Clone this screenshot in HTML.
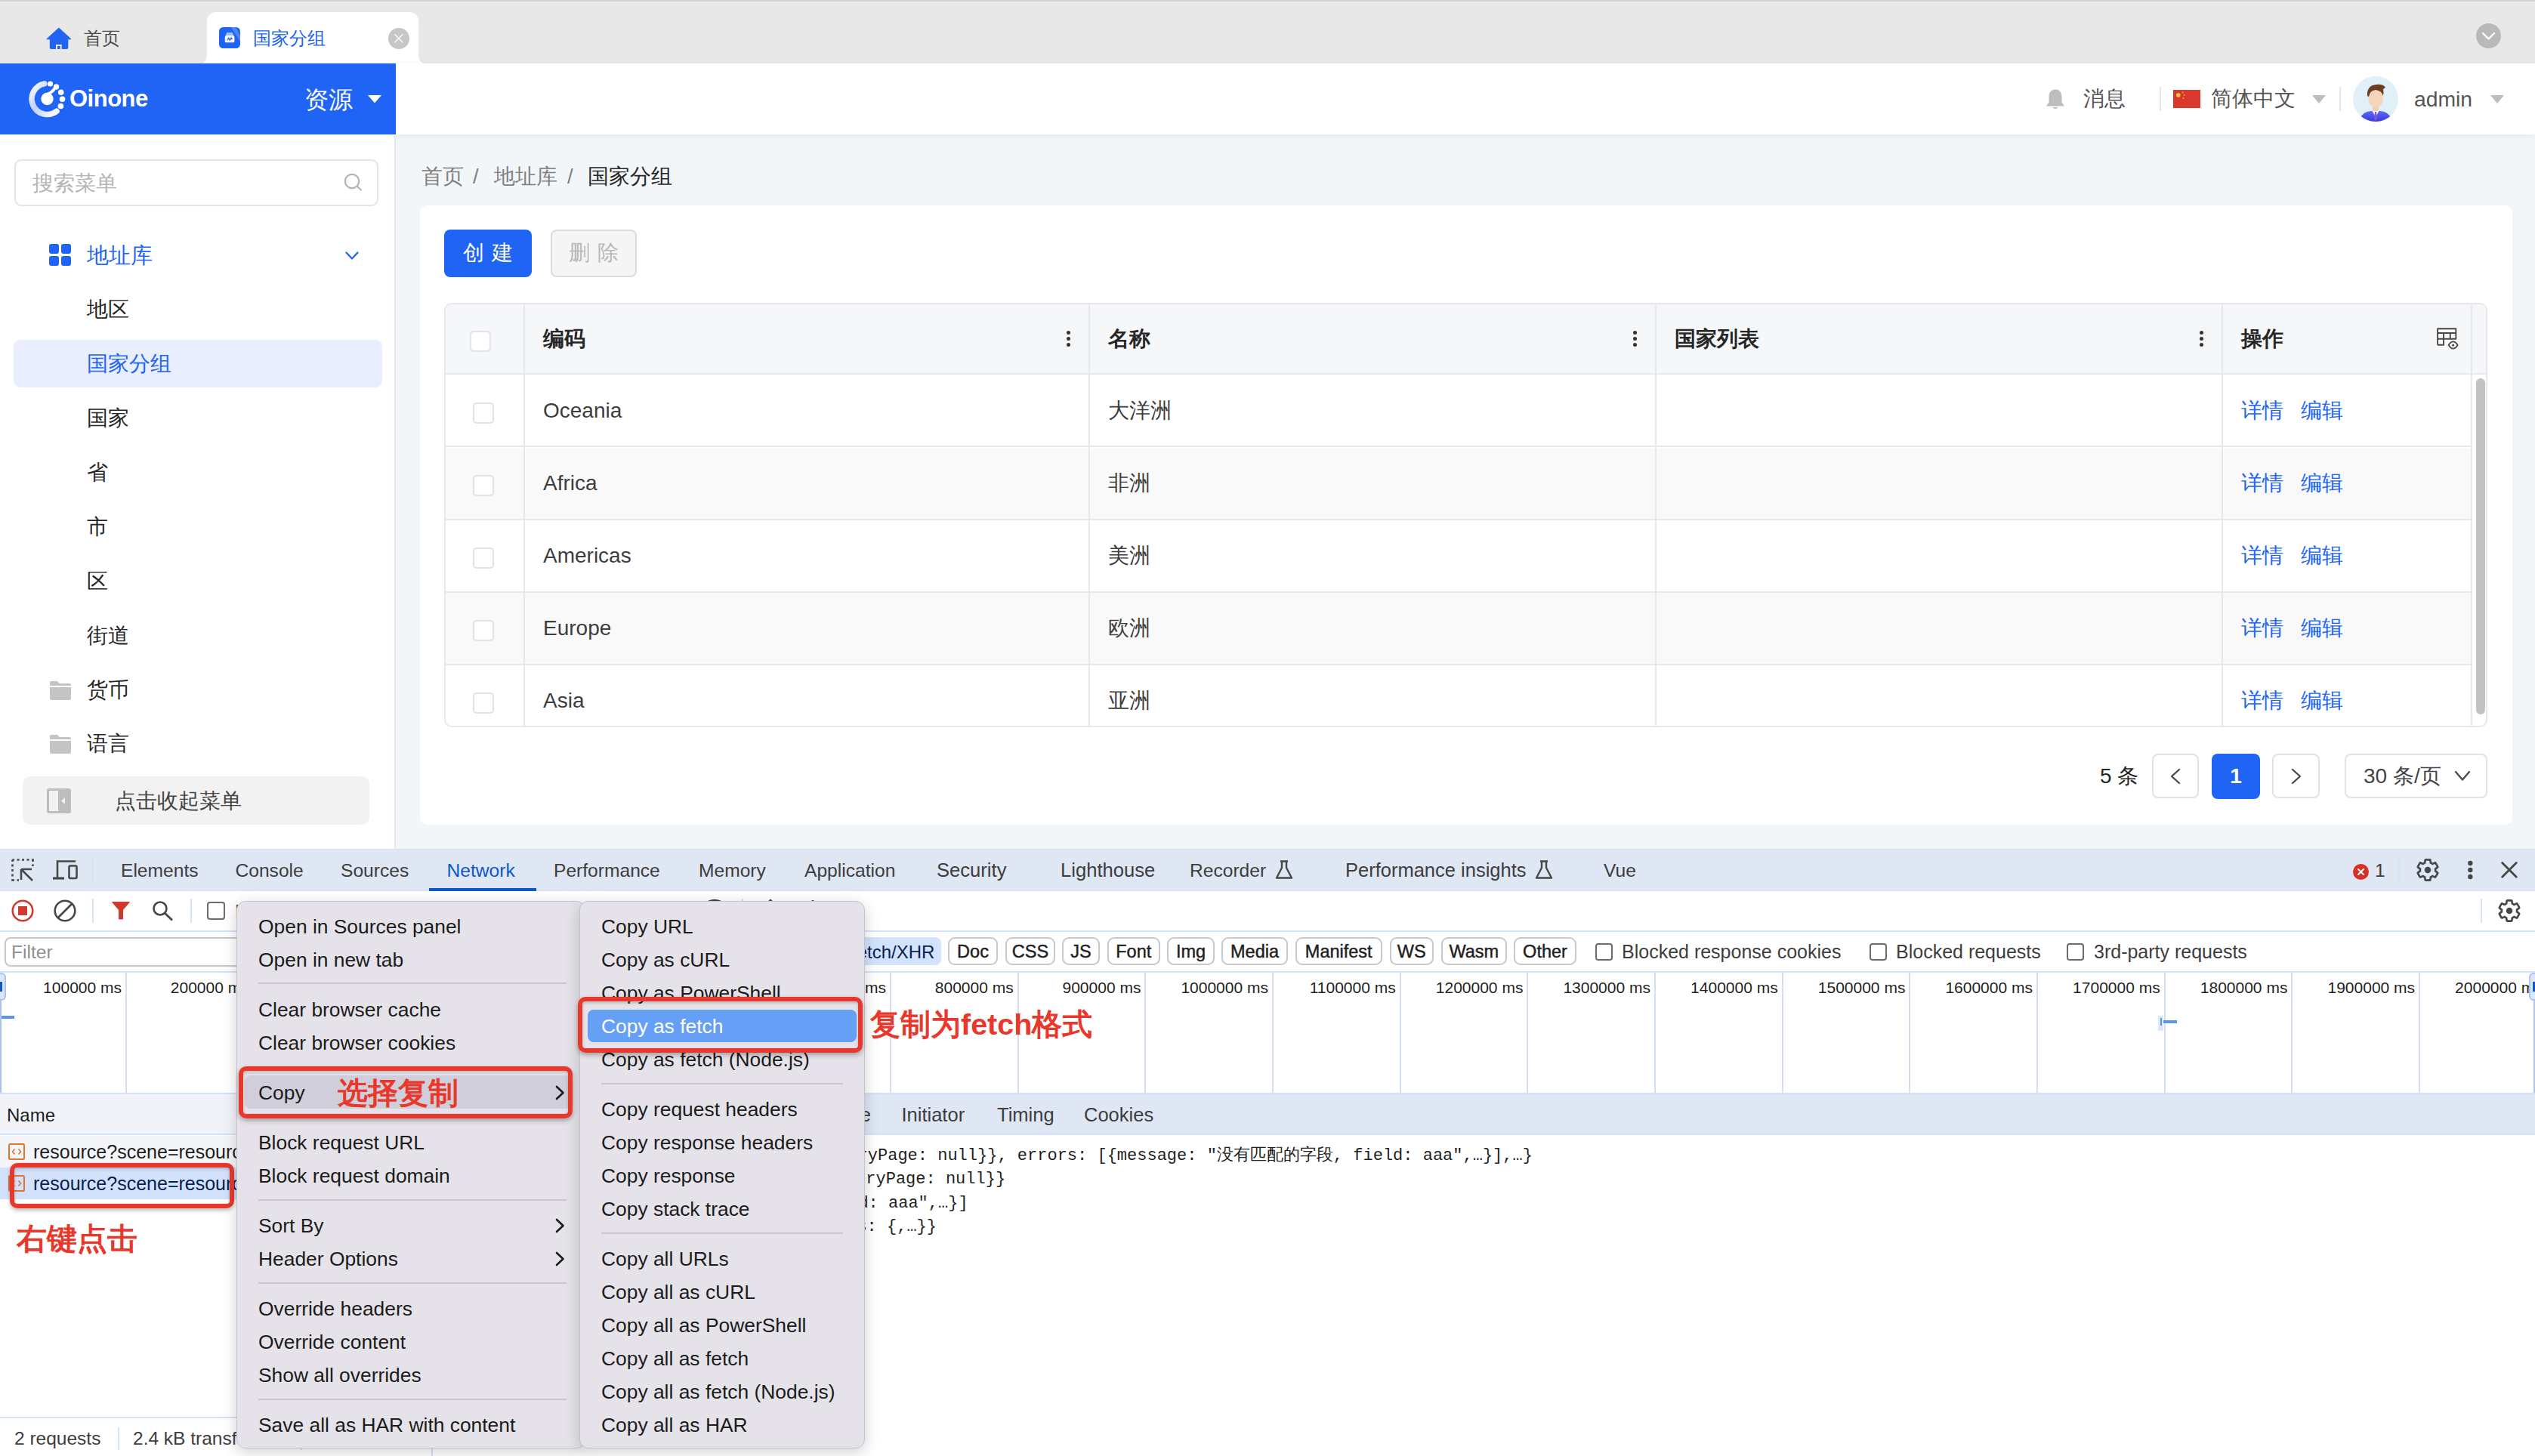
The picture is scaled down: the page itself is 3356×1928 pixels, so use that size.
<!DOCTYPE html>
<html><head><meta charset="utf-8">
<style>
*{box-sizing:border-box;margin:0;padding:0}
html,body{width:3356px;height:1928px;overflow:hidden}
body{position:relative;background:#f3f6f9;font-family:"Liberation Sans",sans-serif;color:#262626}
.a{position:absolute;white-space:nowrap}
.t{position:absolute;white-space:nowrap;line-height:40px;height:40px}
/* tab bar */
#tabbar{left:0;top:0;width:3356px;height:84px;background:#e8e8e8;border-top:2px solid #d2d2d2}
/* header */
#hdr{left:0;top:84px;width:3356px;height:94px;background:#fff;box-shadow:0 2px 8px rgba(0,0,0,0.06);z-index:2}
#blue{left:0;top:0;width:524px;height:94px;background:#2064f6}
/* sidebar */
#side{left:0;top:178px;width:524px;height:946px;background:#fff;border-right:2px solid #e3e7ee;box-shadow:inset 0 1px 0 #eef0f3;z-index:3}
.mi{position:absolute;left:115px;font-size:28px;line-height:40px;height:40px;color:#262626}
/* card */
#card{left:556px;top:272px;width:2770px;height:820px;background:#fff;border-radius:10px}
.cb{position:absolute;width:28px;height:28px;border:2px solid #dfe2ea;border-radius:5px;background:#fff}
.hd{position:absolute;font-size:28px;font-weight:bold;line-height:40px;color:#262626}
.cell{position:absolute;font-size:28px;line-height:40px;color:#3d3d3d}
.lnk{position:absolute;font-size:28px;line-height:40px;color:#2064f6}
.dots{position:absolute;width:6px;height:24px}
.dots i{position:absolute;left:0;width:5.4px;height:5.4px;border-radius:50%;background:#333}
/* devtools */
#dt{left:0;top:1124px;width:3356px;height:804px;background:#fff}
.dtab{position:absolute;top:1px;font-size:24.6px;line-height:55px;color:#3d3d3d}
.chip{position:absolute;top:117px;height:37px;border:2px solid #c9c9c9;border-radius:9px;font-size:23.5px;line-height:35px;text-align:center;color:#1f1f1f;-webkit-text-stroke:0.45px #1f1f1f}
.tl{position:absolute;top:170px;font-size:21px;line-height:28px;color:#1f1f1f;text-align:right;width:160px}
.gl{position:absolute;top:163px;width:2px;height:161px;background:#d3def5}
.menu{position:absolute;background:#e5e3e9;border:1px solid #c5c3ca;border-radius:12px;box-shadow:0 5px 20px rgba(0,0,0,0.18)}
.mt{position:absolute;font-size:26.4px;line-height:40px;color:#1b1b1b;white-space:nowrap}
.sep{position:absolute;height:2px;background:#c9c7cd}
.mono{position:absolute;font-family:"Liberation Mono",monospace;font-size:22px;line-height:30px;color:#1f1f1f;white-space:pre}
.red{position:absolute;border:6px solid #e8382c;border-radius:10px}
.ann{position:absolute;color:#e8382c;font-size:39.5px;line-height:48px;white-space:nowrap;font-weight:600}
</style></head><body>

<!-- TAB BAR -->
<div id="tabbar" class="a">
  <!-- home tab -->
  <svg class="a" style="left:61px;top:33.5px" width="34" height="30" viewBox="0 0 34 30"><path d="M0.8 15.8 L16.9 1 L33 15.8 Z" fill="#2064f6" stroke="#2064f6" stroke-width="1" stroke-linejoin="round"/><path d="M4.8 15 H29.3 V27 Q29.3 29 27.3 29 H6.8 Q4.8 29 4.8 27 Z" fill="#2064f6"/><rect x="13" y="23" width="7.7" height="6" fill="#e8e8e8"/><rect x="15" y="25" width="3.7" height="4" fill="#2064f6"/></svg>
  <div class="t" style="left:111px;top:29px;font-size:24px;color:#4d4d4d">首页</div>
  <!-- active tab -->
  <div class="a" style="left:274px;top:14px;width:280px;height:70px;background:#fff;border-radius:12px 12px 0 0"></div>
  <div class="a" style="left:262px;top:72px;width:12px;height:12px;background:radial-gradient(circle at 0 0,#e8e8e8 11.5px,#fff 12px)"></div>
  <div class="a" style="left:554px;top:72px;width:12px;height:12px;background:radial-gradient(circle at 100% 0,#e8e8e8 11.5px,#fff 12px)"></div>
  <svg class="a" style="left:290px;top:34px" width="28" height="28" viewBox="0 0 28 28"><defs><clipPath id="tic"><rect width="28" height="28" rx="5.5"/></clipPath></defs><g clip-path="url(#tic)"><rect width="28" height="28" fill="#2064f6"/><path d="M16 0 L22 0 L28 11 L28 19 Z" fill="#fff" fill-opacity="0.22"/></g><rect x="10" y="7.3" width="8" height="1.4" fill="#fff" fill-opacity="0.8"/><rect x="9" y="9.4" width="10" height="1.4" fill="#fff" fill-opacity="0.9"/><rect x="7.8" y="11.3" width="12.6" height="9" rx="1.6" fill="#fff"/><path d="M10.8 17.2 L12.8 14.3 L14.2 17.2 L16.2 14 L17.5 16.3" stroke="#2064f6" stroke-width="1.3" fill="none"/></svg>
  <div class="t" style="left:335px;top:29px;font-size:24px;color:#2064f6">国家分组</div>
  <div class="a" style="left:514px;top:35px;width:28px;height:28px;border-radius:50%;background:#c6c6c6"></div>
  <svg class="a" style="left:514px;top:35px" width="28" height="28" viewBox="0 0 28 28"><path d="M8.8 8.8 L19 19 M19 8.8 L8.8 19" stroke="#fff" stroke-width="1.3" stroke-linecap="round"/></svg>
  <!-- right dropdown -->
  <div class="a" style="left:3278px;top:29px;width:33px;height:33px;border-radius:50%;background:#b9b9b9"></div>
  <svg class="a" style="left:3278px;top:29px" width="33" height="33" viewBox="0 0 33 33"><path d="M9 13 L16.5 20.5 L24 13" stroke="#fff" stroke-width="2.4" fill="none" stroke-linecap="round" stroke-linejoin="round"/></svg>
</div>

<!-- HEADER -->
<div id="hdr" class="a">
  <div id="blue" class="a">
    <svg class="a" style="left:36px;top:20px" width="52" height="54" viewBox="0 0 52 54">
      <defs><linearGradient id="lg" x1="0" y1="0" x2="1" y2="1"><stop offset="0" stop-color="#fff"/><stop offset="0.45" stop-color="#bcd0fb"/><stop offset="1" stop-color="#fff"/></linearGradient></defs>
      <path d="M22.76 6.86 A20.5 20.5 0 1 0 39 43.3" stroke="url(#lg)" stroke-width="7.5" fill="none" stroke-linecap="round"/>
      <circle cx="26.5" cy="27" r="8.2" fill="#fff"/>
      <path d="M26 21 Q33 19 37 12" stroke="#fff" stroke-width="4" fill="none" stroke-linecap="round"/>
      <circle cx="38.5" cy="11" r="3.7" fill="#fff"/>
      <circle cx="30.5" cy="7" r="3.6" fill="#fff"/>
      <circle cx="44.7" cy="18.2" r="3.8" fill="#fff"/>
      <circle cx="46.5" cy="27.3" r="3.8" fill="#fff"/>
      <circle cx="44.4" cy="36.5" r="3.8" fill="#fff"/>
    </svg>
    <div class="a" style="left:93px;top:110px;"></div>
    <div class="t" style="left:92px;top:10px;height:74px;line-height:74px;font-size:31px;font-weight:bold;color:#fff;letter-spacing:-0.5px">Oinone</div>
    <div class="t" style="left:403px;top:28px;font-size:31.5px;color:#fff">资源</div>
    <svg class="a" style="left:487px;top:41.5px" width="18" height="11" viewBox="0 0 18 11"><path d="M0 0 L18 0 L9 10.5 Z" fill="#fff"/></svg>
  </div>
  <!-- right header items -->
  <svg class="a" style="left:2708px;top:33px" width="26" height="30" viewBox="0 0 26 30"><path d="M13 1.5 C7 1.5 4.5 6 4.5 11 L4.5 18.5 L1 23.5 L25 23.5 L21.5 18.5 L21.5 11 C21.5 6 19 1.5 13 1.5 Z" fill="#bdbdbd"/><path d="M9.5 25 Q13 29.5 16.5 25 Z" fill="#bdbdbd"/></svg>
  <div class="t" style="left:2758px;top:27px;font-size:28px;color:#555">消息</div>
  <div class="a" style="left:2859px;top:31px;width:2px;height:32px;background:#e6e6e6"></div>
  <svg class="a" style="left:2877px;top:35px" width="36" height="24" viewBox="0 0 37 24" preserveAspectRatio="none"><rect width="37" height="24" fill="#d8392c"/><circle cx="7" cy="7" r="2.8" fill="#f4d03f"/><circle cx="13" cy="3.5" r="1" fill="#e8a83a"/><circle cx="15" cy="7" r="1" fill="#e8a83a"/><circle cx="14" cy="11" r="1" fill="#e8a83a"/></svg>
  <div class="t" style="left:2927px;top:27px;font-size:28px;color:#555">简体中文</div>
  <svg class="a" style="left:3061px;top:41.5px" width="18" height="12" viewBox="0 0 18 12"><path d="M0 0 L18 0 L9 11 Z" fill="#bdbdbd"/></svg>
  <div class="a" style="left:3097px;top:31px;width:2px;height:32px;background:#e6e6e6"></div>
  <svg class="a" style="left:3115px;top:17px" width="60" height="60" viewBox="0 0 60 60">
    <defs><clipPath id="av"><circle cx="30" cy="30" r="30"/></clipPath><linearGradient id="suit" x1="0" y1="0" x2="0" y2="1"><stop offset="0" stop-color="#5b6cf5"/><stop offset="1" stop-color="#3b2fd9"/></linearGradient></defs>
    <circle cx="30" cy="30" r="30" fill="#dff0f8"/>
    <g clip-path="url(#av)">
      <path d="M9 57 Q12 47 24 46 L36 46 Q48 47 51 57 L51 62 L9 62 Z" fill="url(#suit)"/>
      <path d="M25 45 L30 54 L35 45 Z" fill="#fff"/>
      <path d="M29 47 L31 47 L32 56 L30 59 L28 56 Z" fill="#7a5bd6"/>
      <rect x="26" y="38" width="8" height="8" fill="#f2cfb1"/>
      <ellipse cx="30" cy="29" rx="10" ry="12" fill="#f5d5ba"/>
      <path d="M19 26 Q18 12 31 11 Q40 10 43 15 L40 17 Q41 22 40 26 Q38 19 30 18 Q22 19 21 27 Z" fill="#6b3f21"/>
    </g>
  </svg>
  <div class="t" style="left:3196px;top:27px;font-size:28.3px;color:#555">admin</div>
  <svg class="a" style="left:3297px;top:41.5px" width="18" height="12" viewBox="0 0 18 12"><path d="M0 0 L18 0 L9 11 Z" fill="#bdbdbd"/></svg>
</div>

<!-- SIDEBAR -->
<div id="side" class="a">
  <div class="a" style="left:19px;top:33px;width:482px;height:62px;border:2px solid #e1e4ec;border-radius:9px"></div>
  <div class="t" style="left:43px;top:45px;font-size:28px;color:#b5b5b5">搜索菜单</div>
  <svg class="a" style="left:455px;top:51px" width="27" height="25" viewBox="0 0 27 25"><circle cx="11" cy="11" r="9.2" stroke="#b3b3b3" stroke-width="2.2" fill="none"/><path d="M18 18 L23 22.5" stroke="#b3b3b3" stroke-width="2.2" stroke-linecap="round"/></svg>
  <svg class="a" style="left:65px;top:145px" width="30" height="30" viewBox="0 0 30 30"><rect x="0" y="0" width="13" height="13" rx="3" fill="#2064f6"/><rect x="16" y="0" width="13" height="13" rx="3" fill="#2064f6"/><rect x="0" y="16" width="13" height="13" rx="3" fill="#2064f6"/><rect x="16" y="16" width="13" height="13" rx="3" fill="#2064f6"/></svg>
  <div class="mi" style="top:140px;color:#2064f6;font-size:28.5px">地址库</div>
  <svg class="a" style="left:457px;top:155px" width="18" height="12" viewBox="0 0 18 12"><path d="M1.5 1.5 L9 9.5 L16.5 1.5" stroke="#2064f6" stroke-width="2.2" fill="none" stroke-linecap="round" stroke-linejoin="round"/></svg>
  <div class="mi" style="top:212px">地区</div>
  <div class="a" style="left:18px;top:272px;width:488px;height:63px;border-radius:9px;background:#e8eefd"></div>
  <div class="mi" style="top:284px;color:#2064f6">国家分组</div>
  <div class="mi" style="top:356px">国家</div>
  <div class="mi" style="top:428px">省</div>
  <div class="mi" style="top:500px">市</div>
  <div class="mi" style="top:572px">区</div>
  <div class="mi" style="top:644px">街道</div>
  <svg class="a" style="left:66px;top:724px" width="28" height="25" viewBox="0 0 28 25"><path d="M0 2 Q0 0 2 0 L10 0 L12.5 3 L26 3 Q28 3 28 5 L28 23 Q28 25 26 25 L2 25 Q0 25 0 23 Z" fill="#c4c4c4"/><rect x="0" y="6" width="28" height="2" fill="#fff"/></svg>
  <div class="mi" style="top:716px">货币</div>
  <svg class="a" style="left:66px;top:795px" width="28" height="25" viewBox="0 0 28 25"><path d="M0 2 Q0 0 2 0 L10 0 L12.5 3 L26 3 Q28 3 28 5 L28 23 Q28 25 26 25 L2 25 Q0 25 0 23 Z" fill="#c4c4c4"/><rect x="0" y="6" width="28" height="2" fill="#fff"/></svg>
  <div class="mi" style="top:787px">语言</div>
  <div class="a" style="left:30px;top:850px;width:459px;height:64px;border-radius:10px;background:#f2f2f2"></div>
  <svg class="a" style="left:62px;top:866px" width="32" height="33" viewBox="0 0 32 33"><rect x="0" y="0" width="32" height="33" rx="3" fill="#bdbdbd"/><rect x="3" y="3" width="12" height="27" fill="#f2f2f2"/><path d="M24 12 L19 16.5 L24 21 Z" fill="#f2f2f2"/></svg>
  <div class="mi" style="left:152px;top:863px;color:#444">点击收起菜单</div>
</div>

<!-- CONTENT -->
<!-- breadcrumb -->
<div class="t" style="left:558px;top:214px;font-size:27.5px;color:#808080">首页</div>
<div class="t" style="left:626px;top:214px;font-size:27.5px;color:#808080">/</div>
<div class="t" style="left:654px;top:214px;font-size:27.5px;color:#808080">地址库</div>
<div class="t" style="left:751px;top:214px;font-size:27.5px;color:#808080">/</div>
<div class="t" style="left:778px;top:214px;font-size:27.5px;color:#262626">国家分组</div>
<div id="card" class="a">
  <div class="a" style="left:32px;top:32px;width:116px;height:63px;border-radius:8px;background:#2064f6"></div>
  <div class="t" style="left:32px;top:43px;width:116px;text-align:center;font-size:28px;color:#fff;letter-spacing:10px;text-indent:10px">创建</div>
  <div class="a" style="left:173px;top:32px;width:114px;height:63px;border-radius:8px;background:#f5f5f5;border:2px solid #dcdcdc"></div>
  <div class="t" style="left:173px;top:43px;width:114px;text-align:center;font-size:28px;color:#b8b8b8;letter-spacing:10px;text-indent:10px">删除</div>
</div>
<!-- table -->
<div class="a" style="left:588px;top:401px;width:2705px;height:562px;border:2px solid #e6e8ee;border-radius:10px;overflow:hidden;background:#fff">
  <div class="a" style="left:0;top:0;width:2705px;height:93px;background:#f6f7f9;border-bottom:2px solid #e6e8ee"></div>
  <div class="a" style="left:0;top:190px;width:2681px;height:96px;background:#f9f9fa"></div>
  <div class="a" style="left:0;top:382px;width:2681px;height:96px;background:#f9f9fa"></div>
  <div class="a" style="left:0;top:187px;width:2681px;height:2px;background:#e6e8ee"></div>
  <div class="a" style="left:0;top:284px;width:2681px;height:2px;background:#e6e8ee"></div>
  <div class="a" style="left:0;top:380px;width:2681px;height:2px;background:#e6e8ee"></div>
  <div class="a" style="left:0;top:476px;width:2681px;height:2px;background:#e6e8ee"></div>
  <div class="a" style="left:103px;top:0;width:2px;height:562px;background:#e6e8ee"></div>
  <div class="a" style="left:851px;top:0;width:2px;height:562px;background:#e6e8ee"></div>
  <div class="a" style="left:1601px;top:0;width:2px;height:562px;background:#e6e8ee"></div>
  <div class="a" style="left:2351px;top:0;width:2px;height:562px;background:#e6e8ee"></div>
  <div class="a" style="left:2681px;top:0;width:2px;height:562px;background:#e6e8ee"></div>
  <div class="a" style="left:2688px;top:98px;width:12px;height:445px;border-radius:6px;background:#c2c2c2"></div>
  <div class="cb" style="left:32px;top:35px"></div>
  <div class="hd" style="left:129px;top:26px">编码</div>
  <div class="dots" style="left:822px;top:35px"><i style="top:0"></i><i style="top:8px"></i><i style="top:16px"></i></div>
  <div class="hd" style="left:877px;top:26px">名称</div>
  <div class="dots" style="left:1572px;top:35px"><i style="top:0"></i><i style="top:8px"></i><i style="top:16px"></i></div>
  <div class="hd" style="left:1627px;top:26px">国家列表</div>
  <div class="dots" style="left:2322px;top:35px"><i style="top:0"></i><i style="top:8px"></i><i style="top:16px"></i></div>
  <div class="hd" style="left:2377px;top:26px">操作</div>
  <svg class="a" style="left:2634px;top:29px" width="32" height="32" viewBox="0 0 32 32"><path d="M3.1 24.7 V3.2 H27.3 V16.8 H3.1 M3.1 9 H27.3 M11 9 V24.7 H3.1 M19.75 9 V16.8" stroke="#474747" stroke-width="1.9" fill="none" stroke-linejoin="round"/><path d="M17.6 24.9 Q20.5 20.3 23.6 20.3 Q26.7 20.3 29.6 24.9 Q26.7 29.5 23.6 29.5 Q20.5 29.5 17.6 24.9 Z" stroke="#474747" stroke-width="1.8" fill="#f6f7f9"/><circle cx="23.6" cy="24.9" r="1.5" fill="#474747"/></svg>
  <div class="cb" style="left:36px;top:130px"></div><div class="cell" style="left:129px;top:121px">Oceania</div><div class="cell" style="left:877px;top:121px">大洋洲</div><div class="lnk" style="left:2377px;top:121px">详情</div><div class="lnk" style="left:2456px;top:121px">编辑</div>
<div class="cb" style="left:36px;top:226px"></div><div class="cell" style="left:129px;top:217px">Africa</div><div class="cell" style="left:877px;top:217px">非洲</div><div class="lnk" style="left:2377px;top:217px">详情</div><div class="lnk" style="left:2456px;top:217px">编辑</div>
<div class="cb" style="left:36px;top:322px"></div><div class="cell" style="left:129px;top:313px">Americas</div><div class="cell" style="left:877px;top:313px">美洲</div><div class="lnk" style="left:2377px;top:313px">详情</div><div class="lnk" style="left:2456px;top:313px">编辑</div>
<div class="cb" style="left:36px;top:418px"></div><div class="cell" style="left:129px;top:409px">Europe</div><div class="cell" style="left:877px;top:409px">欧洲</div><div class="lnk" style="left:2377px;top:409px">详情</div><div class="lnk" style="left:2456px;top:409px">编辑</div>
<div class="cb" style="left:36px;top:514px"></div><div class="cell" style="left:129px;top:505px">Asia</div><div class="cell" style="left:877px;top:505px">亚洲</div><div class="lnk" style="left:2377px;top:505px">详情</div><div class="lnk" style="left:2456px;top:505px">编辑</div>

</div>
<!-- pagination -->
<div class="t" style="left:2780px;top:1008px;font-size:28px;color:#262626">5 条</div>
<div class="a" style="left:2849px;top:998px;width:62px;height:59px;border:2px solid #dfe2ea;border-radius:8px;background:#fff"></div>
<svg class="a" style="left:2872px;top:1017px" width="16" height="22" viewBox="0 0 16 22"><path d="M13 2 L3 11 L13 20" stroke="#444" stroke-width="2.2" fill="none" stroke-linecap="round" stroke-linejoin="round"/></svg>
<div class="a" style="left:2928px;top:998px;width:64px;height:60px;border-radius:8px;background:#2064f6"></div>
<div class="t" style="left:2928px;top:1008px;width:64px;text-align:center;font-size:28px;color:#fff;font-weight:bold">1</div>
<div class="a" style="left:3008px;top:998px;width:63px;height:59px;border:2px solid #dfe2ea;border-radius:8px;background:#fff"></div>
<svg class="a" style="left:3032px;top:1017px" width="16" height="22" viewBox="0 0 16 22"><path d="M3 2 L13 11 L3 20" stroke="#444" stroke-width="2.2" fill="none" stroke-linecap="round" stroke-linejoin="round"/></svg>
<div class="a" style="left:3104px;top:998px;width:189px;height:59px;border:2px solid #dfe2ea;border-radius:8px;background:#fff"></div>
<div class="t" style="left:3129px;top:1008px;font-size:28px;color:#444">30 条/页</div>
<svg class="a" style="left:3249px;top:1020px" width="22" height="15" viewBox="0 0 22 15"><path d="M2 2 L11 12.5 L20 2" stroke="#444" stroke-width="2.2" fill="none" stroke-linecap="round" stroke-linejoin="round"/></svg>


<!-- DEVTOOLS -->
<div id="dt" class="a">
<div class="a" style="left:0;top:0;width:3356px;height:56px;background:#dfe6f4;border-top:1px solid #d3e1fa;border-bottom:1px solid #d3e1fa"></div>
<svg class="a" style="left:15px;top:13px" width="30" height="30" viewBox="0 0 30 30"><path d="M1.5 1.5 H4 M7.5 1.5 H10.5 M14 1.5 H17 M20.5 1.5 H23.5 M27 1.5 H28.5 V4 M28.5 7.5 V10 M1.5 1.5 V4 M1.5 7.5 V10.5 M1.5 14 V17 M1.5 20.5 V23.5 M1.5 27 V28.5 H4 M7.5 28.5 H10" stroke="#474747" stroke-width="2.6" fill="none"/><path d="M13 14 L13 28 M13 14 L27 14 M13.5 14.5 L28 29" stroke="#474747" stroke-width="2.6" fill="none"/></svg>
<svg class="a" style="left:70px;top:15px" width="34" height="26" viewBox="0 0 34 26"><path d="M6 24 V1.5 H30" stroke="#474747" stroke-width="2.6" fill="none"/><path d="M0 24 H15" stroke="#474747" stroke-width="3.2"/><rect x="21.5" y="7.5" width="10" height="16.5" rx="1.5" stroke="#474747" stroke-width="2.6" fill="none"/></svg>
<div class="a" style="left:122px;top:12px;width:2px;height:32px;background:#d3e1fa"></div>
<div class="dtab" style="left:160px;color:#3d3d3d">Elements</div>
<div class="dtab" style="left:311.5px;color:#3d3d3d">Console</div>
<div class="dtab" style="left:451px;color:#3d3d3d">Sources</div>
<div class="dtab" style="left:591.5px;color:#0b57d0">Network</div>
<div class="dtab" style="left:733px;color:#3d3d3d">Performance</div>
<div class="dtab" style="left:925px;color:#3d3d3d">Memory</div>
<div class="dtab" style="left:1065px;color:#3d3d3d">Application</div>
<div class="dtab" style="left:1240px;color:#3d3d3d;font-size:25.6px">Security</div>
<div class="dtab" style="left:1404px;color:#3d3d3d;font-size:25.6px">Lighthouse</div>
<div class="dtab" style="left:1575px;color:#3d3d3d">Recorder</div>
<div class="dtab" style="left:1781px;color:#3d3d3d;font-size:25.5px">Performance insights</div>
<div class="dtab" style="left:2123px;color:#3d3d3d">Vue</div>
<div class="a" style="left:568px;top:52px;width:142px;height:4px;background:#0b57d0"></div>
<svg class="a" style="left:1688px;top:15px" width="24" height="26" viewBox="0 0 24 26"><path d="M7 1.5 H17 M9 1.5 V10 L2 23.5 H22 L15 10 V1.5" stroke="#474747" stroke-width="2.4" fill="none" stroke-linejoin="round"/></svg>
<svg class="a" style="left:2032px;top:15px" width="24" height="26" viewBox="0 0 24 26"><path d="M7 1.5 H17 M9 1.5 V10 L2 23.5 H22 L15 10 V1.5" stroke="#474747" stroke-width="2.4" fill="none" stroke-linejoin="round"/></svg>
<div class="a" style="left:3115px;top:20px;width:21px;height:21px;border-radius:50%;background:#d93025"></div>
<svg class="a" style="left:3116px;top:21px" width="19" height="19" viewBox="0 0 19 19"><path d="M6 6 L13 13 M13 6 L6 13" stroke="#fff" stroke-width="2" stroke-linecap="round"/></svg>
<div class="dtab" style="left:3144px;color:#3d3d3d">1</div>
<div class="a" style="left:3175px;top:12px;width:2px;height:32px;background:#d3e1fa"></div>
<svg class="a" style="left:3197px;top:10.7px" width="34" height="34" viewBox="0 0 24 24"><path d="M19.14 12.94c.04-.3.06-.61.06-.94 0-.32-.02-.64-.07-.94l2.03-1.58a.49.49 0 0 0 .12-.61l-1.92-3.32a.488.488 0 0 0-.59-.22l-2.39.96c-.5-.38-1.03-.7-1.62-.94l-.36-2.54a.484.484 0 0 0-.48-.41h-3.84c-.24 0-.43.17-.47.41l-.36 2.54c-.59.24-1.13.57-1.62.94l-2.39-.96c-.22-.08-.47 0-.59.22L2.74 8.87c-.12.21-.08.47.12.61l2.03 1.58c-.05.3-.09.63-.09.94s.02.64.07.94l-2.03 1.58a.49.49 0 0 0-.12.61l1.92 3.32c.12.22.37.29.59.22l2.39-.96c.5.38 1.03.7 1.62.94l.36 2.54c.05.24.24.41.48.41h3.84c.24 0 .44-.17.47-.41l.36-2.54c.59-.24 1.13-.56 1.62-.94l2.39.96c.22.08.47 0 .59-.22l1.92-3.32c.12-.22.07-.47-.12-.61l-2.01-1.58z" fill="none" stroke="#474747" stroke-width="1.9"/><circle cx="12" cy="12" r="3" fill="#474747"/></svg>
<svg class="a" style="left:3265px;top:13.7px" width="10" height="28" viewBox="0 0 10 28"><circle cx="5.3" cy="5" r="3.2" fill="#474747"/><circle cx="5.3" cy="14" r="3.2" fill="#474747"/><circle cx="5.3" cy="23" r="3.2" fill="#474747"/></svg>
<svg class="a" style="left:3309px;top:15px" width="26" height="26" viewBox="0 0 26 26"><path d="M3.6 3.6 L22.3 22.3 M22.3 3.6 L3.6 22.3" stroke="#474747" stroke-width="2.8" stroke-linecap="round"/></svg>
<div class="a" style="left:0;top:108px;width:3356px;height:2px;background:#d3e1fa"></div>
<svg class="a" style="left:15px;top:67px" width="30" height="30" viewBox="0 0 30 30"><circle cx="15" cy="15" r="13.3" stroke="#d0392e" stroke-width="2.6" fill="none"/><rect x="9" y="9" width="12" height="12" fill="#d0392e"/></svg>
<svg class="a" style="left:71px;top:67px" width="30" height="30" viewBox="0 0 30 30"><circle cx="15" cy="15" r="13.3" stroke="#474747" stroke-width="2.6" fill="none"/><path d="M6 24 L24 6" stroke="#474747" stroke-width="2.6"/></svg>
<div class="a" style="left:122px;top:66px;width:2px;height:32px;background:#d3e1fa"></div>
<svg class="a" style="left:148px;top:70px" width="24" height="24" viewBox="0 0 24 24"><path d="M0.5 0.5 H23.5 L14.5 11 V23 H9.5 V11 Z" fill="#d0392e" stroke="#d0392e" stroke-linejoin="round"/></svg>
<svg class="a" style="left:201px;top:68px" width="30" height="28" viewBox="0 0 30 28"><circle cx="11" cy="11" r="8.5" stroke="#474747" stroke-width="2.6" fill="none"/><path d="M17 17 L27 26.5" stroke="#474747" stroke-width="2.8"/></svg>
<div class="a" style="left:252px;top:66px;width:2px;height:32px;background:#d3e1fa"></div>
<div class="a" style="left:274px;top:70px;width:24px;height:24px;border:2px solid #6b6b6b;border-radius:4px"></div>
<div class="dtab" style="left:311px;top:55px">Preserve log</div>
<svg class="a" style="left:928px;top:63px" width="36" height="30" viewBox="0 0 36 30"><path d="M3 12 Q18 -2 33 12" stroke="#474747" stroke-width="2.6" fill="none"/><path d="M9 18 Q18 9 27 18" stroke="#474747" stroke-width="2.6" fill="none"/></svg>
<div class="a" style="left:982px;top:66px;width:2px;height:32px;background:#d3e1fa"></div>
<svg class="a" style="left:1008px;top:66px" width="24" height="28" viewBox="0 0 24 28"><path d="M12 2 L12 20 M5 9 L12 2 L19 9 M3 25 H21" stroke="#474747" stroke-width="2.6" fill="none"/></svg>
<svg class="a" style="left:1064px;top:66px" width="24" height="28" viewBox="0 0 24 28"><path d="M12 2 L12 20 M5 13 L12 20 L19 13 M3 25 H21" stroke="#474747" stroke-width="2.6" fill="none"/></svg>
<div class="a" style="left:3284px;top:66px;width:2px;height:32px;background:#d3e1fa"></div>
<svg class="a" style="left:3304.7px;top:64.8px" width="34" height="34" viewBox="0 0 24 24"><path d="M19.14 12.94c.04-.3.06-.61.06-.94 0-.32-.02-.64-.07-.94l2.03-1.58a.49.49 0 0 0 .12-.61l-1.92-3.32a.488.488 0 0 0-.59-.22l-2.39.96c-.5-.38-1.03-.7-1.62-.94l-.36-2.54a.484.484 0 0 0-.48-.41h-3.84c-.24 0-.43.17-.47.41l-.36 2.54c-.59.24-1.13.57-1.62.94l-2.39-.96c-.22-.08-.47 0-.59.22L2.74 8.87c-.12.21-.08.47.12.61l2.03 1.58c-.05.3-.09.63-.09.94s.02.64.07.94l-2.03 1.58a.49.49 0 0 0-.12.61l1.92 3.32c.12.22.37.29.59.22l2.39-.96c.5.38 1.03.7 1.62.94l.36 2.54c.05.24.24.41.48.41h3.84c.24 0 .44-.17.47-.41l.36-2.54c.59-.24 1.13-.56 1.62-.94l2.39.96c.22.08.47 0 .59-.22l1.92-3.32c.12-.22.07-.47-.12-.61l-2.01-1.58z" fill="none" stroke="#474747" stroke-width="1.9"/><circle cx="12" cy="12" r="3" fill="#474747"/></svg>
<div class="a" style="left:0;top:162px;width:3356px;height:2px;background:#d3e1fa"></div>
<div class="a" style="left:6px;top:117px;width:560px;height:39px;border:2px solid #c7c7c7;border-radius:8px"></div>
<div class="dtab" style="left:15px;top:109px;color:#8f8f8f">Filter</div>
<div class="a" style="left:1000px;top:117px;width:246px;height:37px;border-radius:8px;background:#d3e3fd"></div>
<div class="dtab" style="left:1120px;top:109px;color:#0a1f4d;font-size:24px">Fetch/XHR</div>
<div class="chip" style="left:1255px;width:66px">Doc</div>
<div class="chip" style="left:1331px;width:66px">CSS</div>
<div class="chip" style="left:1406px;width:50px">JS</div>
<div class="chip" style="left:1465.5px;width:70.5px">Font</div>
<div class="chip" style="left:1545px;width:63px">Img</div>
<div class="chip" style="left:1617px;width:88px">Media</div>
<div class="chip" style="left:1714.5px;width:115.5px">Manifest</div>
<div class="chip" style="left:1839.5px;width:58.5px">WS</div>
<div class="chip" style="left:1907.6px;width:87.40000000000009px">Wasm</div>
<div class="chip" style="left:2004px;width:83px">Other</div>
<div class="a" style="left:2112px;top:125px;width:23px;height:23px;border:2px solid #6b6b6b;border-radius:4px"></div>
<div class="dtab" style="left:2147px;top:109px;font-size:25px;color:#3d3d3d">Blocked response cookies</div>
<div class="a" style="left:2475px;top:125px;width:23px;height:23px;border:2px solid #6b6b6b;border-radius:4px"></div>
<div class="dtab" style="left:2510px;top:109px;font-size:25px;color:#3d3d3d">Blocked requests</div>
<div class="a" style="left:2736px;top:125px;width:23px;height:23px;border:2px solid #6b6b6b;border-radius:4px"></div>
<div class="dtab" style="left:2772px;top:109px;font-size:25px;color:#3d3d3d">3rd-party requests</div>
<div class="gl" style="left:166.0px"></div>
<div class="tl" style="left:1.0px">100000 ms</div>
<div class="gl" style="left:334.7px"></div>
<div class="tl" style="left:169.7px">200000 ms</div>
<div class="gl" style="left:503.3px"></div>
<div class="tl" style="left:338.3px">300000 ms</div>
<div class="gl" style="left:672.0px"></div>
<div class="tl" style="left:507.0px">400000 ms</div>
<div class="gl" style="left:840.7px"></div>
<div class="tl" style="left:675.7px">500000 ms</div>
<div class="gl" style="left:1009.3px"></div>
<div class="tl" style="left:844.3px">600000 ms</div>
<div class="gl" style="left:1178.0px"></div>
<div class="tl" style="left:1013.0px">700000 ms</div>
<div class="gl" style="left:1346.7px"></div>
<div class="tl" style="left:1181.7px">800000 ms</div>
<div class="gl" style="left:1515.4px"></div>
<div class="tl" style="left:1350.4px">900000 ms</div>
<div class="gl" style="left:1684.0px"></div>
<div class="tl" style="left:1519.0px">1000000 ms</div>
<div class="gl" style="left:1852.7px"></div>
<div class="tl" style="left:1687.7px">1100000 ms</div>
<div class="gl" style="left:2021.4px"></div>
<div class="tl" style="left:1856.4px">1200000 ms</div>
<div class="gl" style="left:2190.0px"></div>
<div class="tl" style="left:2025.0px">1300000 ms</div>
<div class="gl" style="left:2358.7px"></div>
<div class="tl" style="left:2193.7px">1400000 ms</div>
<div class="gl" style="left:2527.4px"></div>
<div class="tl" style="left:2362.4px">1500000 ms</div>
<div class="gl" style="left:2696.0px"></div>
<div class="tl" style="left:2531.0px">1600000 ms</div>
<div class="gl" style="left:2864.7px"></div>
<div class="tl" style="left:2699.7px">1700000 ms</div>
<div class="gl" style="left:3033.4px"></div>
<div class="tl" style="left:2868.4px">1800000 ms</div>
<div class="gl" style="left:3202.1px"></div>
<div class="tl" style="left:3037.1px">1900000 ms</div>
<div class="tl" style="left:3205.7px">2000000 ms</div>
<div class="a" style="left:-8px;top:164px;width:16px;height:37px;border:2px solid #a9c4f3;border-radius:6px;background:#dbe6fb"></div>
<div class="a" style="left:0;top:176px;width:2.5px;height:13px;background:#0b57d0"></div>
<div class="a" style="left:0;top:200px;width:2px;height:124px;background:#a9c4f3"></div>
<div class="a" style="left:2px;top:221px;width:17px;height:4px;background:#5b93ef"></div>
<div class="a" style="left:3348px;top:164px;width:16px;height:37px;border:2px solid #a9c4f3;border-radius:6px;background:#dbe6fb"></div>
<div class="a" style="left:3353px;top:176px;width:3px;height:13px;background:#0b57d0"></div>
<div class="a" style="left:3354px;top:200px;width:2px;height:124px;background:#a9c4f3"></div>
<div class="a" style="left:2857px;top:221px;width:7px;height:20px;background:#dbe6fb"></div>
<div class="a" style="left:2860px;top:224px;width:2px;height:10px;background:#5b93ef"></div>
<div class="a" style="left:2864px;top:227px;width:18px;height:4px;background:#5b93ef"></div>
<div class="a" style="left:0;top:323px;width:3356px;height:2px;background:#d3e1fa"></div>
<div class="a" style="left:0;top:325px;width:572px;height:54px;background:#f1f3f8;border-bottom:2px solid #d3e1fa"></div>
<div class="dtab" style="left:9px;top:325px;color:#1f1f1f;font-size:24px">Name</div>
<div class="a" style="left:572px;top:325px;width:2784px;height:54px;background:#dfe6f4;border-bottom:2px solid #d3e1fa"></div>
<div class="dtab" style="left:620px;top:325px;font-size:25.5px">Headers</div>
<div class="dtab" style="left:760px;top:325px;font-size:25.5px">Preview</div>
<div class="dtab" style="left:1038px;top:325px;font-size:25.5px">Response</div>
<div class="dtab" style="left:1193.5px;top:325px;font-size:25.5px">Initiator</div>
<div class="dtab" style="left:1320px;top:325px;font-size:25.5px">Timing</div>
<div class="dtab" style="left:1435px;top:325px;font-size:25.5px">Cookies</div>
<div class="a" style="left:571px;top:325px;width:2px;height:479px;background:#d3e1fa"></div>
<div class="a" style="left:0;top:380px;width:571px;height:42px;background:#f4f5f9"></div><div class="a" style="left:0;top:422px;width:571px;height:42px;background:#d3e2fc"></div>
<svg class="a" style="left:11px;top:390px" width="22" height="22" viewBox="0 0 22 22"><rect x="1" y="1" width="20" height="20" rx="1.5" stroke="#e0752b" stroke-width="2" fill="none"/><path d="M8.5 7.5 L5.5 11 L8.5 14.5 M13.5 7.5 L16.5 11 L13.5 14.5" stroke="#e0752b" stroke-width="1.6" fill="none"/></svg>
<div class="dtab" style="left:44px;top:374px;color:#1f1f1f;font-size:25px">resource?scene=resourceCountryGroup</div>
<svg class="a" style="left:11px;top:432px" width="22" height="22" viewBox="0 0 22 22"><rect x="1" y="1" width="20" height="20" rx="1.5" stroke="#e0752b" stroke-width="2" fill="none"/><path d="M8.5 7.5 L5.5 11 L8.5 14.5 M13.5 7.5 L16.5 11 L13.5 14.5" stroke="#e0752b" stroke-width="1.6" fill="none"/></svg>
<div class="dtab" style="left:44px;top:416px;color:#0a1f4d;font-size:25px">resource?scene=resourceCountryGroup</div>
<div class="a" style="left:0;top:752px;width:572px;height:2px;background:#d3e1fa"></div><div class="a" style="left:398px;top:766px;width:2px;height:30px;background:#d3e1fa"></div>
<div class="dtab" style="left:19px;top:753px;font-size:24.5px;color:#3d3d3d">2 requests</div>
<div class="a" style="left:156px;top:766px;width:2px;height:30px;background:#d3e1fa"></div>
<div class="dtab" style="left:176px;top:753px;font-size:24.5px;color:#3d3d3d">2.4 kB transferred</div>
<div class="mono" style="left:1135.6px;top:391.6px">ryPage: null}}, errors: [{message: "没有匹配的字段, field: aaa",…}],…}</div>
</div>

<div class="mono" style="left:1133.1px;top:1547px">eryPage: null}}</div>
<div class="mono" style="left:1083.6px;top:1578.7px">field: aaa",…}]</div>
<div class="mono" style="left:1121.2px;top:1610px">ns: {,…}}</div>
<div class="red" style="left:13px;top:1540px;width:297px;height:60px;box-shadow:0 3px 5px rgba(0,0,0,0.25), inset 0 2px 4px rgba(0,0,0,0.2)"></div>
<div class="ann" style="left:22px;top:1616px">右键点击</div>
<div class="menu" style="left:313px;top:1193px;width:462px;height:725px"></div>
<div class="a" style="left:324px;top:1424px;width:432px;height:44px;border-radius:8px;background:#d0ceda"></div>
<div class="sep" style="left:342px;top:1301.3px;width:408px"></div>
<div class="sep" style="left:342px;top:1412.3px;width:408px"></div>
<div class="sep" style="left:342px;top:1478.3px;width:408px"></div>
<div class="sep" style="left:342px;top:1588.3px;width:408px"></div>
<div class="sep" style="left:342px;top:1698.3px;width:408px"></div>
<div class="sep" style="left:342px;top:1852.3px;width:408px"></div>
<div class="mt" style="left:342px;top:1206.8px">Open in Sources panel</div>
<div class="mt" style="left:342px;top:1250.8px">Open in new tab</div>
<div class="mt" style="left:342px;top:1316.8px">Clear browser cache</div>
<div class="mt" style="left:342px;top:1360.8px">Clear browser cookies</div>
<div class="mt" style="left:342px;top:1426.8px">Copy</div>
<div class="mt" style="left:342px;top:1492.8px">Block request URL</div>
<div class="mt" style="left:342px;top:1536.8px">Block request domain</div>
<div class="mt" style="left:342px;top:1602.8px">Sort By</div>
<div class="mt" style="left:342px;top:1646.8px">Header Options</div>
<div class="mt" style="left:342px;top:1712.8px">Override headers</div>
<div class="mt" style="left:342px;top:1756.8px">Override content</div>
<div class="mt" style="left:342px;top:1800.8px">Show all overrides</div>
<div class="mt" style="left:342px;top:1866.8px">Save all as HAR with content</div>
<svg class="a" style="left:735px;top:1436.8px" width="13" height="20" viewBox="0 0 13 20"><path d="M2 2 L10.5 10 L2 18" stroke="#1b1b1b" stroke-width="2.6" fill="none" stroke-linecap="round" stroke-linejoin="round"/></svg>
<svg class="a" style="left:735px;top:1612.8px" width="13" height="20" viewBox="0 0 13 20"><path d="M2 2 L10.5 10 L2 18" stroke="#1b1b1b" stroke-width="2.6" fill="none" stroke-linecap="round" stroke-linejoin="round"/></svg>
<svg class="a" style="left:735px;top:1656.8px" width="13" height="20" viewBox="0 0 13 20"><path d="M2 2 L10.5 10 L2 18" stroke="#1b1b1b" stroke-width="2.6" fill="none" stroke-linecap="round" stroke-linejoin="round"/></svg>
<div class="menu" style="left:767px;top:1193px;width:378px;height:725px"></div>
<div class="a" style="left:778px;top:1337px;width:356px;height:43px;border-radius:8px;background:#65a0f6"></div>
<div class="sep" style="left:796px;top:1434.3px;width:320px"></div>
<div class="sep" style="left:796px;top:1632.3px;width:320px"></div>
<div class="mt" style="left:796px;top:1206.8px;color:#1b1b1b">Copy URL</div>
<div class="mt" style="left:796px;top:1250.8px;color:#1b1b1b">Copy as cURL</div>
<div class="mt" style="left:796px;top:1294.8px;color:#1b1b1b">Copy as PowerShell</div>
<div class="mt" style="left:796px;top:1338.8px;color:#fff">Copy as fetch</div>
<div class="mt" style="left:796px;top:1382.8px;color:#1b1b1b">Copy as fetch (Node.js)</div>
<div class="mt" style="left:796px;top:1448.8px;color:#1b1b1b">Copy request headers</div>
<div class="mt" style="left:796px;top:1492.8px;color:#1b1b1b">Copy response headers</div>
<div class="mt" style="left:796px;top:1536.8px;color:#1b1b1b">Copy response</div>
<div class="mt" style="left:796px;top:1580.8px;color:#1b1b1b">Copy stack trace</div>
<div class="mt" style="left:796px;top:1646.8px;color:#1b1b1b">Copy all URLs</div>
<div class="mt" style="left:796px;top:1690.8px;color:#1b1b1b">Copy all as cURL</div>
<div class="mt" style="left:796px;top:1734.8px;color:#1b1b1b">Copy all as PowerShell</div>
<div class="mt" style="left:796px;top:1778.8px;color:#1b1b1b">Copy all as fetch</div>
<div class="mt" style="left:796px;top:1822.8px;color:#1b1b1b">Copy all as fetch (Node.js)</div>
<div class="mt" style="left:796px;top:1866.8px;color:#1b1b1b">Copy all as HAR</div>
<div class="red" style="left:316px;top:1412px;width:442px;height:69px;box-shadow:0 3px 6px rgba(0,0,0,0.3), inset 0 2px 4px rgba(0,0,0,0.2)"></div>
<div class="ann" style="left:447px;top:1423px">选择复制</div>
<div class="red" style="left:765px;top:1320px;width:377px;height:73.5px;box-shadow:0 3px 6px rgba(0,0,0,0.3), inset 0 2px 4px rgba(0,0,0,0.2)"></div>
<div class="ann" style="left:1152px;top:1332px">复制为fetch格式</div>
</body></html>
